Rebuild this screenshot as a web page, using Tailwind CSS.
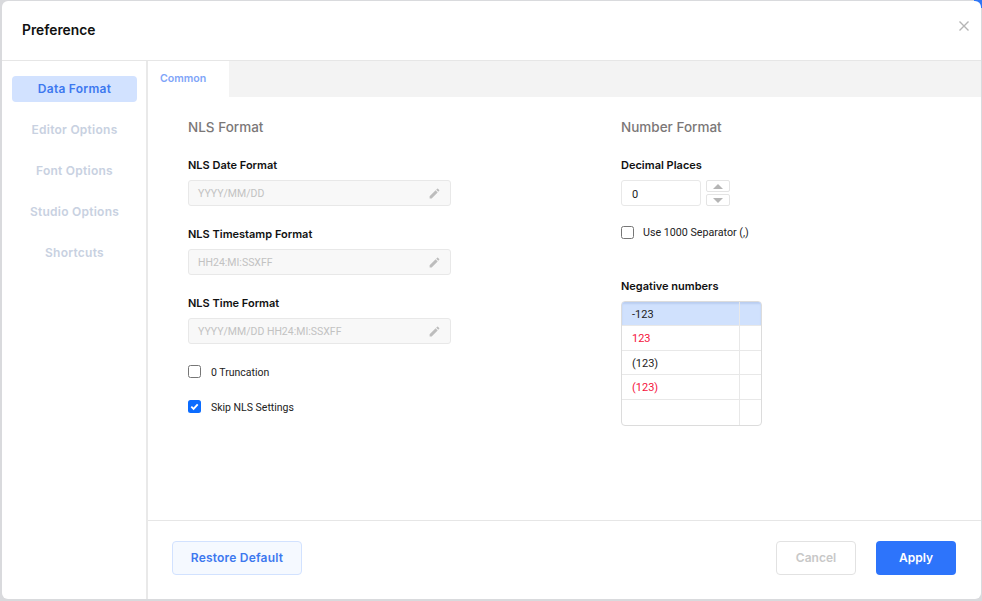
<!DOCTYPE html>
<html lang="en">
<head>
    <meta charset="UTF-8">
    <title>Preference</title>
    <script src="https://cdn.jsdelivr.net/npm/@tailwindcss/browser@4"></script>
</head>
<body class="h-[601px] w-[982px] overflow-hidden bg-[#d4d6da] font-['Inter',sans-serif]">

<div class="relative h-[601px] w-[982px] pl-[2px] pt-[1px] pr-[1px] pb-[2px] bg-[linear-gradient(225deg,#2f76f6_6px,#d9dadd_6px)]">
    <div class="flex h-full flex-col rounded-[6px] bg-white">

        <!-- Header -->
        <div class="relative flex h-[60px] shrink-0 items-center border-b border-[#e6e6e6] pb-[1px] pl-[20px]">
            <h2 class="text-[13.8px] font-semibold text-[#111]">Preference</h2>
            <svg class="absolute right-[11px] top-[19px] h-[12px] w-[12px]" viewBox="0 0 12 12" fill="none" stroke="#b5b5b5" stroke-width="1.4">
                <path d="M1.5 1.5l9 9M10.5 1.5l-9 9"/>
            </svg>
        </div>

        <div class="flex min-h-0 flex-1">
            <!-- Sidebar -->
            <div class="flex w-[146px] shrink-0 flex-col gap-[15px] border-r-2 border-[#e9e9e9] pl-[10px] pr-[9px] pt-[15px] text-center text-[12px] font-semibold tracking-[0.25px] text-[#c8d1e1]">
                <div class="flex h-[26px] items-center justify-center rounded-[4px] bg-[#d2e2ff] text-[#3d78ef]">Data Format</div>
                <div class="flex h-[26px] items-center justify-center">Editor Options</div>
                <div class="flex h-[26px] items-center justify-center">Font Options</div>
                <div class="flex h-[26px] items-center justify-center">Studio Options</div>
                <div class="flex h-[26px] items-center justify-center">Shortcuts</div>
            </div>

            <div class="flex min-w-0 flex-1 flex-col">
                <!-- Tabs -->
                <div class="flex h-[36px] shrink-0 bg-[#f3f3f3]">
                    <div class="h-full w-[81px] bg-white pl-[12px] pt-[11px] text-[10.6px] leading-[14px] font-semibold text-[#7fa5f8]">Common</div>
                </div>

                <!-- Form -->
                <div class="flex min-h-0 flex-1 pl-[40px] pt-[21px]">
                    <div class="w-[433px] shrink-0">
                        <h3 class="text-[13.5px] leading-[18px] font-medium text-[#7b7777]">NLS Format</h3>

                        <label class="mt-[22px] block text-[11px] leading-[14px] font-semibold text-[#111]">NLS Date Format</label>
                        <div class="mt-[8px] flex h-[26px] w-[263px] items-center justify-between rounded-[3px] border border-[#e8e8e8] bg-[#f8f8f8] pl-[9px] pr-[9px] font-['Roboto',sans-serif] text-[10.5px] text-[#c2c2c2]">
                            <span class="pt-[2px]">YYYY/MM/DD</span>
                            <svg class="h-[13px] w-[13px]" viewBox="0 0 24 24" fill="#bdbdbd"><path d="M3 17.25V21h3.75L17.81 9.94l-3.75-3.75L3 17.25zM20.71 7.04a1 1 0 000-1.41l-2.34-2.34a1 1 0 00-1.41 0l-1.83 1.83 3.75 3.75 1.83-1.83z"/></svg>
                        </div>

                        <label class="mt-[21px] block text-[11px] leading-[14px] font-semibold text-[#111]">NLS Timestamp Format</label>
                        <div class="mt-[8px] flex h-[26px] w-[263px] items-center justify-between rounded-[3px] border border-[#e8e8e8] bg-[#f8f8f8] pl-[9px] pr-[9px] font-['Roboto',sans-serif] text-[10.5px] text-[#c2c2c2]">
                            <span class="pt-[2px]">HH24:MI:SSXFF</span>
                            <svg class="h-[13px] w-[13px]" viewBox="0 0 24 24" fill="#bdbdbd"><path d="M3 17.25V21h3.75L17.81 9.94l-3.75-3.75L3 17.25zM20.71 7.04a1 1 0 000-1.41l-2.34-2.34a1 1 0 00-1.41 0l-1.83 1.83 3.75 3.75 1.83-1.83z"/></svg>
                        </div>

                        <label class="mt-[21px] block text-[11px] leading-[14px] font-semibold text-[#111]">NLS Time Format</label>
                        <div class="mt-[8px] flex h-[26px] w-[263px] items-center justify-between rounded-[3px] border border-[#e8e8e8] bg-[#f8f8f8] pl-[9px] pr-[9px] font-['Roboto',sans-serif] text-[10.5px] text-[#c2c2c2]">
                            <span class="pt-[2px]">YYYY/MM/DD HH24:MI:SSXFF</span>
                            <svg class="h-[13px] w-[13px]" viewBox="0 0 24 24" fill="#bdbdbd"><path d="M3 17.25V21h3.75L17.81 9.94l-3.75-3.75L3 17.25zM20.71 7.04a1 1 0 000-1.41l-2.34-2.34a1 1 0 00-1.41 0l-1.83 1.83 3.75 3.75 1.83-1.83z"/></svg>
                        </div>

                        <div class="mt-[21px] flex h-[13px] items-center gap-[10px] font-['Roboto',sans-serif] text-[10.5px] text-[#222]">
                            <span class="h-[13px] w-[13px] rounded-[2.5px] border border-[#767676] bg-white"></span>
                            <span class="pt-[2px]">0 Truncation</span>
                        </div>
                        <div class="mt-[22px] flex h-[13px] items-center gap-[10px] font-['Roboto',sans-serif] text-[10.5px] text-[#222]">
                            <span class="flex h-[13px] w-[13px] items-center justify-center rounded-[2.5px] bg-[#0b6cff]">
                                <svg class="h-[11px] w-[11px]" viewBox="0 0 12 12" fill="none" stroke="#fff" stroke-width="2"><path d="M2.5 6.2l2.5 2.5 4.5-5"/></svg>
                            </span>
                            <span class="pt-[2px]">Skip NLS Settings</span>
                        </div>
                    </div>

                    <div>
                        <h3 class="text-[13.5px] leading-[18px] font-medium text-[#7b7777]">Number Format</h3>

                        <label class="mt-[22px] block text-[11px] leading-[14px] font-semibold text-[#111]">Decimal Places</label>
                        <div class="mt-[8px] flex items-center gap-[5px]">
                            <div class="flex h-[26px] w-[80px] items-center rounded-[3px] border border-[#e8e8e8] bg-white pl-[10px] pt-[4px] font-['Roboto',sans-serif] text-[11px] text-[#222]">0</div>
                            <div class="flex flex-col gap-[2px]">
                                <div class="flex h-[12px] w-[24px] items-center justify-center rounded-[2px] border border-[#e4e4e4]">
                                    <span class="h-0 w-0 border-x-[5px] border-b-[5px] border-x-transparent border-b-[#b5b5b5]"></span>
                                </div>
                                <div class="flex h-[12px] w-[24px] items-center justify-center rounded-[2px] border border-[#e4e4e4]">
                                    <span class="h-0 w-0 border-x-[5px] border-t-[5px] border-x-transparent border-t-[#b5b5b5]"></span>
                                </div>
                            </div>
                        </div>

                        <div class="mt-[20px] flex h-[13px] items-center gap-[9px] font-['Roboto',sans-serif] text-[10.7px] text-[#222]">
                            <span class="h-[13px] w-[13px] rounded-[2.5px] border border-[#767676] bg-white"></span>
                            <span class="pt-[2px]">Use 1000 Separator (,)</span>
                        </div>

                        <label class="mt-[40px] block text-[11px] leading-[14px] font-semibold text-[#111]">Negative numbers</label>
                        <div class="mt-[8px] h-[125px] w-[141px] overflow-hidden rounded-[4px] border border-[#dcdcdc] font-['Roboto',sans-serif] text-[11px] text-[#222]">
                            <div class="flex h-[23px] bg-[#d0e1fd] shadow-[inset_0_2px_2px_#b9cdf0]">
                                <div class="flex w-[118px] items-center border-r border-[#e8e8e8] pl-[10px] pt-[3px]">-123</div>
                            </div>
                            <div class="flex h-[25px] border-t border-[#e8e8e8] text-[#f5123c]">
                                <div class="flex w-[118px] items-center border-r border-[#e8e8e8] pl-[10px] pt-[3px]">123</div>
                            </div>
                            <div class="flex h-[24px] border-t border-[#e8e8e8]">
                                <div class="flex w-[118px] items-center border-r border-[#e8e8e8] pl-[10px] pt-[3px]">(123)</div>
                            </div>
                            <div class="flex h-[25px] border-t border-[#e8e8e8] text-[#f5123c]">
                                <div class="flex w-[118px] items-center border-r border-[#e8e8e8] pl-[10px] pt-[3px]">(123)</div>
                            </div>
                            <div class="flex h-[26px] border-t border-[#e8e8e8]">
                                <div class="w-[118px] border-r border-[#e8e8e8]"></div>
                            </div>
                        </div>
                    </div>
                </div>

                <!-- Footer -->
                <div class="flex h-[79px] shrink-0 items-center justify-between border-t border-[#e6e6e6] pb-[4px] pl-[24px] pr-[25px] text-[12px] font-semibold">
                    <button class="h-[34px] w-[130px] rounded-[4px] border border-[#d2e2ff] bg-[#f5f9ff] tracking-[0.2px] text-[#3d78ef]">Restore Default</button>
                    <div class="flex gap-[20px]">
                        <button class="h-[34px] w-[80px] rounded-[4px] border border-[#e2e2e2] bg-white text-[#c8c8c8]">Cancel</button>
                        <button class="h-[34px] w-[80px] rounded-[4px] bg-[#2d74fb] text-white">Apply</button>
                    </div>
                </div>
            </div>
        </div>
    </div>
</div>

</body>
</html>
